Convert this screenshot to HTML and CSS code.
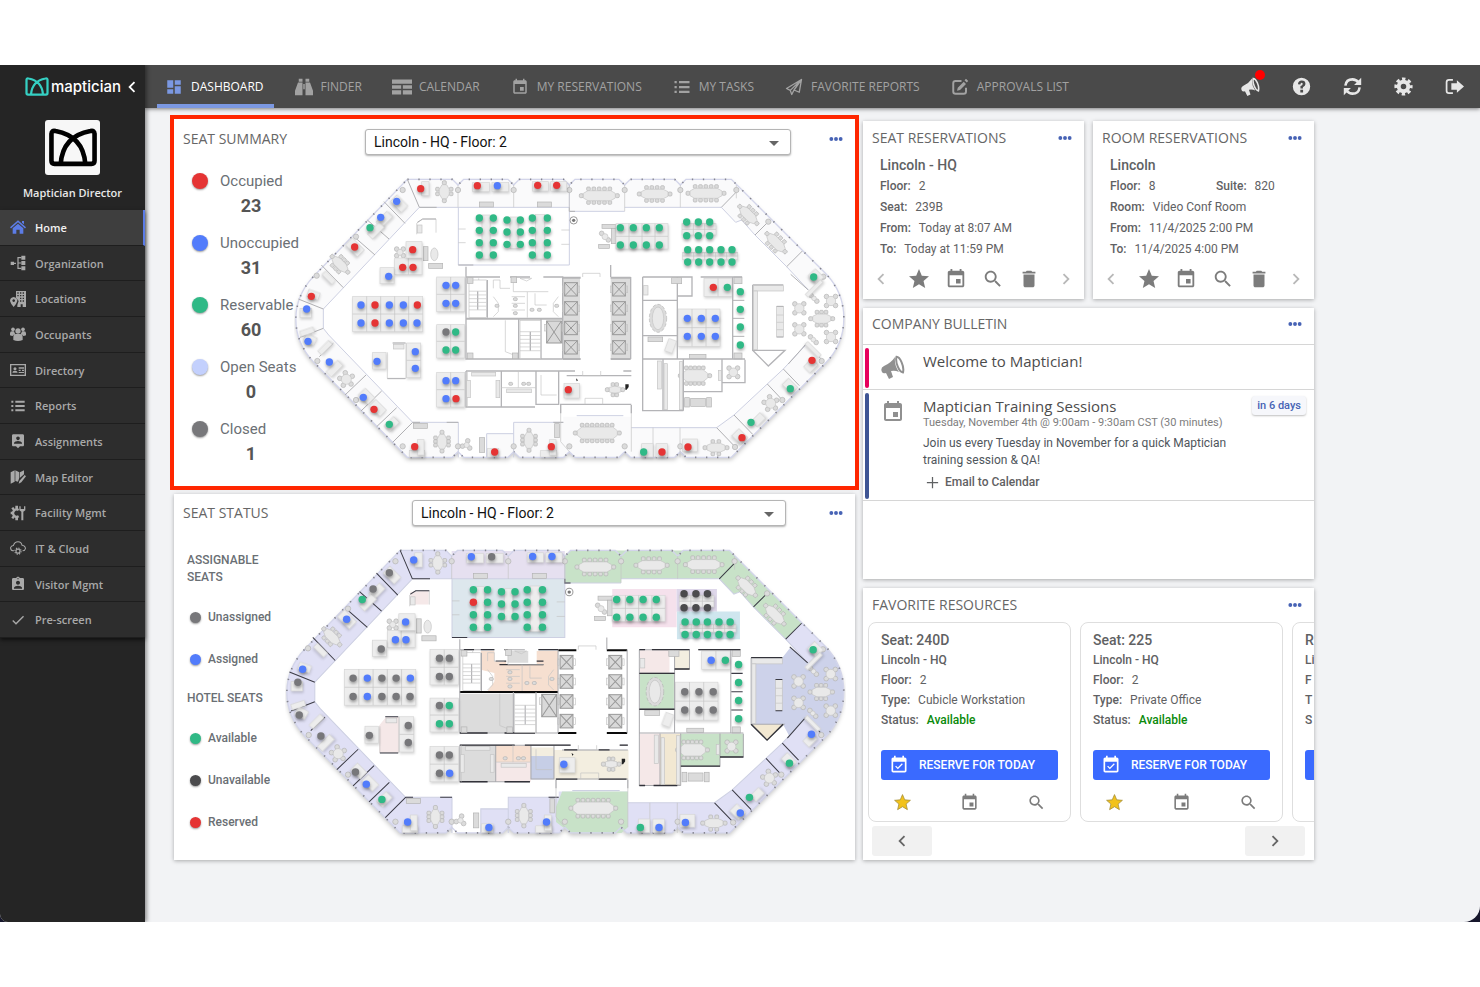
FILE: index.html
```html
<!doctype html>
<html lang="en">
<head>
    <meta charset="utf-8">
    <meta name="viewport" content="width=device-width, initial-scale=1">
    <title>Maptician - Dashboard</title>
    <link rel="stylesheet" href="styles.css">
</head>

<body>
<!-- Icons -->
<svg class="sprite" aria-hidden="true">
    <symbol id="i-logo" viewBox="0 0 48 38"><path d="M3 6Q3 2 7 3Q34 8 36 35M45 6Q45 2 41 3Q14 8 12 35M3 5V32Q3 35 6 35H42Q45 35 45 32V5" fill="none" stroke="currentColor" stroke-width="4.5"/></symbol>
    <symbol id="i-dashboard" viewBox="0 0 24 24"><path d="M3 13h8V3H3v10zm0 8h8v-6H3v6zm10 0h8V11h-8v10zm0-18v6h8V3h-8z"/></symbol>
    <symbol id="i-finder" viewBox="0 0 24 24"><path d="M5 1h5v4H5zM14 1h5v4h-5zM4 6h6v17H0v-6zM14 6h6l4 11v6H14zM11 8h2v7h-2z"/></symbol>
    <symbol id="i-table" viewBox="0 0 24 20"><path d="M0 1h24v5H0zM0 8h11v4H0zM13 8h11v4H13zM0 14h11v5H0zM13 14h11v5H13z"/></symbol>
    <symbol id="i-event" viewBox="0 0 24 24"><path d="M17 12h-5v5h5v-5zM16 1v2H8V1H6v2H5c-1.11 0-1.99.9-1.99 2L3 19c0 1.1.89 2 2 2h14c1.1 0 2-.9 2-2V5c0-1.1-.9-2-2-2h-1V1h-2zm3 18H5V8h14v11z"/></symbol>
    <symbol id="i-event-ok" viewBox="0 0 24 24"><path d="M16.53 11.06L15.47 10l-4.88 4.88-2.12-2.12-1.06 1.06L10.59 17l5.94-5.94zM19 3h-1V1h-2v2H8V1H6v2H5c-1.11 0-1.99.9-1.99 2L3 19c0 1.1.89 2 2 2h14c1.1 0 2-.9 2-2V5c0-1.1-.9-2-2-2zm0 16H5V8h14v11z"/></symbol>
    <symbol id="i-list" viewBox="0 0 24 24"><path d="M2 4h3v3H2zM8 4h14v3H8zM2 10.500h3v3H2zM8 10.500h14v3H8zM2 17h3v3H2zM8 17h14v3H8z"/></symbol>
    <symbol id="i-plane" viewBox="0 0 24 24"><path d="M22 2L2 14l5 2.500L22 2l-3 17-7-3-3 6-2-5.500M22 2L12 16" fill="none" stroke="currentColor" stroke-width="1.800" stroke-linejoin="round"/></symbol>
    <symbol id="i-approve" viewBox="0 0 24 24"><path d="M14 4H6Q3 4 3 7v11q0 3 3 3h11q3 0 3-3v-5" fill="none" stroke="currentColor" stroke-width="2.600"/><path d="M8 17l1-4 8-8 3 3-8 8zM20 1l3 3-2 2-3-3z"/></symbol>
    <symbol id="i-horn" viewBox="0 0 24 24"><path d="M1 17Q-1 13 3 11Q10 8 14 2Q13 10 18 17Q14 15 10 16l2 6-4 2-3-6Q2 19 1 17z"/><path d="M15.500 1.800C19 2 23.500 11 22 17.500C18 17 14 7 15.500 1.800z" fill="none" stroke="currentColor" stroke-width="2"/></symbol>
    <symbol id="i-help" viewBox="0 0 24 24"><path d="M12 1a11 11 0 1 0 0 22 11 11 0 0 0 0-22zM10.500 16h3.500v3.500h-3.500zM7.500 9Q8 4.500 12.300 4.500Q17 4.500 17 8.800Q17 11.500 13.800 12.800V14.500H10.700V11.500Q13.500 10.300 13.500 8.800Q13.500 7.400 12.200 7.400Q10.800 7.400 10.500 9.400z" fill-rule="evenodd"/></symbol>
    <symbol id="i-sync" viewBox="0 0 24 24"><path d="M3 11Q4 3 12 3Q16.500 3 20 7M21 13Q20 21 12 21Q7.500 21 4 17" fill="none" stroke="currentColor" stroke-width="3.200"/><path d="M23 1v9h-9zM1 23v-9h9z"/></symbol>
    <symbol id="i-gear" viewBox="0 0 24 24"><circle cx="12" cy="12" r="6" fill="none" stroke="currentColor" stroke-width="5"/><circle cx="12" cy="12" r="9.500" fill="none" stroke="currentColor" stroke-width="4" stroke-dasharray="4.200 3.260" stroke-dashoffset="2.100"/></symbol>
    <symbol id="i-exit" viewBox="0 0 24 24"><path d="M10 3.500H5Q2 3.500 2 6.500v11Q2 20.500 5 20.500h5" fill="none" stroke="currentColor" stroke-width="2.200"/><path d="M8 8h7V4l9 8-9 8v-4H8z"/></symbol>
    <symbol id="i-home" viewBox="0 0 24 24"><path d="M12 2l12 10.500-1.500 1.700L12 5 1.500 14.200 0 12.500zM18 3h3v5l-3-2.500zM12 7l8 7v8h-5.500v-6h-5v6H4v-8z"/></symbol>
    <symbol id="i-org" viewBox="0 0 24 24"><path d="M1 10h5v5H1zM17 1h6v6h-6zM17 9h6v6h-6zM17 17h6v6h-6z"/><path d="M6 12.500h3M17 4h-5v16h5M12 12h5" fill="none" stroke="currentColor" stroke-width="1.800"/></symbol>
    <symbol id="i-building" viewBox="0 0 24 24"><path d="M9 0h15v24h-5v-4h-3v4h-5v-3l2-6-4-5zM11 2v2h2V2zM15 2v2h2V2zM19 2v2h2V2zM11 6v2h2V6zM15 6v2h2V6zM19 6v2h2V6zM15 10v2h2v-2zM19 10v2h2v-2zM15 14v2h2v-2zM19 14v2h2v-2z" fill-rule="evenodd"/><path d="M5.500 9Q11 10 11 15Q10 19 5.500 24Q1 19 0 15Q0 10 5.500 9zM5.500 12.500a2 2 0 1 0 .1 0z" fill-rule="evenodd"/></symbol>
    <symbol id="i-people" viewBox="0 0 24 24"><circle cx="12" cy="7.500" r="4"/><circle cx="4.500" cy="5" r="2.800"/><circle cx="19.500" cy="5" r="2.800"/><path d="M5 21v-4q0-5 4-5h6q4 0 4 5v4q-7 3-14 0zM0 14V11q0-3 3-3h3q1 3 2 4-3 1-4 3-2 0-4-1zM24 14V11q0-3-3-3h-3q-1 3-2 4 3 1 4 3 2 0 4-1z"/></symbol>
    <symbol id="i-idcard" viewBox="0 0 24 20"><path d="M1 2h22v16H1z" fill="none" stroke="currentColor" stroke-width="2"/><circle cx="7.500" cy="8" r="2.300"/><path d="M3.500 14q0-3 4-3t4 3zM13 6h8v2h-8zM13 9.500h3v2h-3zM18 9.500h3v2h-3zM13 13h8v1.500h-8z"/></symbol>
    <symbol id="i-assign" viewBox="0 0 24 24"><path d="M19 2H5c-1.110 0-2 .9-2 2v14c0 1.100.89 2 2 2h4l3 3 3-3h4c1.100 0 2-.9 2-2V4c0-1.100-.9-2-2-2zm-7 3.300c1.490 0 2.700 1.210 2.700 2.700 0 1.490-1.210 2.700-2.700 2.700-1.490 0-2.700-1.210-2.700-2.700 0-1.490 1.210-2.700 2.700-2.700zM18 16H6v-.9c0-2 4-3.100 6-3.100s6 1.100 6 3.100v.9z"/></symbol>
    <symbol id="i-map" viewBox="0 0 24 24"><path d="M1 5l6-3v17l-6 3zM8 2l6 3v8l-2 6-4-1zM15 5l6-3v6l-6 5zM22 9l2 2-7 9-4 2 1-4z"/></symbol>
    <symbol id="i-facility" viewBox="0 0 24 24"><path d="M13 7.500A5.500 5.500 0 1 0 13 17" fill="none" stroke="currentColor" stroke-width="3.500"/><path d="M8 1h4v5H8zM8 18h4v5H8zM1 10h4v4H1zM2 5l3-2 3 4-3 2zM2 19l3 2 3-4-3-2zM14 2v6l3 2v13h3V10l3-2V2h-2v4h-5V2z"/></symbol>
    <symbol id="i-cloud" viewBox="0 0 28 26"><path d="M7 18H5Q1 17 1 12.500Q2 9 6 8.500Q8 2 14 2Q20 2 21 8Q27 9 27 14Q26 18 22 18" fill="none" stroke="currentColor" stroke-width="1.800"/><circle cx="14" cy="18.500" r="3.500" fill="none" stroke="currentColor" stroke-width="2"/><circle cx="14" cy="18.500" r="5.500" fill="none" stroke="currentColor" stroke-width="2" stroke-dasharray="2.200 2.120"/></symbol>
    <symbol id="i-visitor" viewBox="0 0 24 24"><path d="M19 3h-4.180C14.400 1.840 13.300 1 12 1c-1.300 0-2.400.84-2.820 2H5c-1.100 0-2 .9-2 2v14c0 1.100.9 2 2 2h14c1.100 0 2-.9 2-2V5c0-1.100-.9-2-2-2zm-7 0c.55 0 1 .45 1 1s-.45 1-1 1-1-.45-1-1 .45-1 1-1zm0 4c1.660 0 3 1.340 3 3s-1.340 3-3 3-3-1.340-3-3 1.340-3 3-3zm6 12H6v-1.400c0-2 4-3.100 6-3.100s6 1.100 6 3.100V19z"/></symbol>
    <symbol id="i-check" viewBox="0 0 24 24"><path d="M9 16.170L4.830 12l-1.420 1.410L9 19 21 7l-1.410-1.410z"/></symbol>
    <symbol id="i-search" viewBox="0 0 24 24"><path d="M15.500 14h-.79l-.28-.27C15.410 12.590 16 11.110 16 9.500 16 5.910 13.090 3 9.500 3S3 5.910 3 9.500 5.910 16 9.500 16c1.610 0 3.090-.59 4.230-1.570l.27.28v.79l5 4.990L20.490 19l-4.990-5zm-6 0C7.010 14 5 11.990 5 9.500S7.010 5 9.500 5 14 7.010 14 9.500 11.990 14 9.500 14z"/></symbol>
    <symbol id="i-trash" viewBox="0 0 24 24"><path d="M6 19c0 1.100.9 2 2 2h8c1.100 0 2-.9 2-2V7H6v12zM19 4h-3.500l-1-1h-5l-1 1H5v2h14V4z"/></symbol>
    <symbol id="i-star" viewBox="0 0 24 24"><path d="M12 17.270L18.180 21l-1.640-7.030L22 9.240l-7.190-.61L12 2 9.190 8.630 2 9.240l5.460 4.730L5.820 21z"/></symbol>
    <symbol id="i-left" viewBox="0 0 24 24"><path d="M15.410 7.410L14 6l-6 6 6 6 1.410-1.410L10.830 12z"/></symbol>
    <symbol id="i-right" viewBox="0 0 24 24"><path d="M10 6L8.590 7.410 13.170 12l-4.580 4.590L10 18l6-6z"/></symbol>
    <symbol id="i-dots" viewBox="0 0 24 24"><circle cx="4" cy="12" r="3.300"/><circle cx="12" cy="12" r="3.300"/><circle cx="20" cy="12" r="3.300"/></symbol>
    <symbol id="i-plus" viewBox="0 0 24 24"><path d="M11 3h2v8h8v2h-8v8h-2v-8H3v-2h8z"/></symbol>
</svg>

<div class="screen">
<div class="app">
    <!-- Sidebar -->
    <aside class="sidebar">
        <div class="brand">
            <svg class="brand-mark"><use href="#i-logo"/></svg>
            <span class="brand-name">maptician</span>
            <button class="collapse" aria-label="Collapse menu"><svg><use href="#i-left"/></svg></button>
        </div>
        <div class="profile">
            <div class="avatar"><svg><use href="#i-logo"/></svg></div>
            <div class="profile-name">Maptician Director</div>
        </div>
        <nav class="side-nav">
            <a class="active" href="#home"><svg><use href="#i-home"/></svg>Home</a>
            <a href="#organization"><svg><use href="#i-org"/></svg>Organization</a>
            <a href="#locations"><svg><use href="#i-building"/></svg>Locations</a>
            <a href="#occupants"><svg><use href="#i-people"/></svg>Occupants</a>
            <a href="#directory"><svg><use href="#i-idcard"/></svg>Directory</a>
            <a href="#reports"><svg><use href="#i-list"/></svg>Reports</a>
            <a href="#assignments"><svg><use href="#i-assign"/></svg>Assignments</a>
            <a href="#map-editor"><svg><use href="#i-map"/></svg>Map Editor</a>
            <a href="#facility"><svg><use href="#i-facility"/></svg>Facility Mgmt</a>
            <a href="#cloud"><svg><use href="#i-cloud"/></svg>IT &amp; Cloud</a>
            <a href="#visitors"><svg><use href="#i-visitor"/></svg>Visitor Mgmt</a>
            <a href="#pre-screen"><svg><use href="#i-check"/></svg>Pre-screen</a>
        </nav>
    </aside>

    <div class="page">
        <!-- Top bar -->
        <header class="topbar">
            <nav class="tabs">
                <a class="active" href="#dashboard"><svg><use href="#i-dashboard"/></svg>DASHBOARD</a>
                <a href="#finder"><svg><use href="#i-finder"/></svg>FINDER</a>
                <a href="#calendar"><svg><use href="#i-table"/></svg>CALENDAR</a>
                <a href="#my-reservations"><svg><use href="#i-event"/></svg>MY RESERVATIONS</a>
                <a href="#my-tasks"><svg><use href="#i-list"/></svg>MY TASKS</a>
                <a href="#favorite-reports"><svg><use href="#i-plane"/></svg>FAVORITE REPORTS</a>
                <a href="#approvals"><svg><use href="#i-approve"/></svg>APPROVALS LIST</a>
            </nav>
            <div class="tools">
                <button class="has-alert" aria-label="Announcements"><svg><use href="#i-horn"/></svg></button>
                <button aria-label="Help"><svg><use href="#i-help"/></svg></button>
                <button aria-label="Refresh"><svg><use href="#i-sync"/></svg></button>
                <button aria-label="Settings"><svg><use href="#i-gear"/></svg></button>
                <button aria-label="Sign out"><svg><use href="#i-exit"/></svg></button>
            </div>
        </header>

        <main class="dashboard">
            <div class="col-maps">
                <!-- Seat summary -->
                <section class="card summary">
                    <div class="map-head">
                        <h2>SEAT SUMMARY</h2>
                        <div class="select">
                            <select aria-label="Seat summary floor"><option>Lincoln - HQ - Floor: 2</option></select>
                        </div>
                        <button class="more" aria-label="More"><svg><use href="#i-dots"/></svg></button>
                    </div>
                    <div class="map-body">
                        <ul class="totals">
                            <li><i class="dot red"></i>Occupied <b>23</b></li>
                            <li><i class="dot blue"></i>Unoccupied <b>31</b></li>
                            <li><i class="dot green"></i>Reservable <b>60</b></li>
                            <li><i class="dot pale"></i>Open Seats <b>0</b></li>
                            <li><i class="dot gray"></i>Closed <b>1</b></li>
                        </ul>
                        <svg class="plan" id="planSummary" viewBox="42 30 1656 870" role="img" aria-label="Floor 2 seat summary"></svg>
                    </div>
                </section>

                <!-- Seat status -->
                <section class="card status">
                    <div class="map-head">
                        <h2>SEAT STATUS</h2>
                        <div class="select">
                            <select aria-label="Seat status floor"><option>Lincoln - HQ - Floor: 2</option></select>
                        </div>
                        <button class="more" aria-label="More"><svg><use href="#i-dots"/></svg></button>
                    </div>
                    <div class="map-body">
                        <div class="legend">
                            <h3>ASSIGNABLE SEATS</h3>
                            <ul>
                                <li><i class="dot gray"></i>Unassigned</li>
                                <li><i class="dot blue"></i>Assigned</li>
                            </ul>
                            <h3>HOTEL SEATS</h3>
                            <ul>
                                <li><i class="dot green"></i>Available</li>
                                <li><i class="dot dark"></i>Unavailable</li>
                                <li><i class="dot red"></i>Reserved</li>
                            </ul>
                        </div>
                        <svg class="plan zoned" id="planStatus" viewBox="42 30 1656 870" role="img" aria-label="Floor 2 seat status"></svg>
                    </div>
                </section>
            </div>

            <div class="col-info">
                <div class="reservations">
                    <section class="card reservation">
                        <div class="card-head">
                            <h2>SEAT RESERVATIONS</h2>
                            <button class="more" aria-label="More"><svg><use href="#i-dots"/></svg></button>
                        </div>
                        <div class="details">
                            <h3>Lincoln - HQ</h3>
                            <p><b>Floor:</b> 2</p>
                            <p><b>Seat:</b> 239B</p>
                            <p><b>From:</b> Today at 8:07 AM</p>
                            <p><b>To:</b> Today at 11:59 PM</p>
                        </div>
                        <div class="actions">
                            <button class="faint" aria-label="Previous"><svg><use href="#i-left"/></svg></button>
                            <button aria-label="Favorite"><svg class="big"><use href="#i-star"/></svg></button>
                            <button aria-label="Calendar"><svg><use href="#i-event"/></svg></button>
                            <button aria-label="Find"><svg><use href="#i-search"/></svg></button>
                            <button aria-label="Delete"><svg><use href="#i-trash"/></svg></button>
                            <button class="faint" aria-label="Next"><svg><use href="#i-right"/></svg></button>
                        </div>
                    </section>

                    <section class="card reservation">
                        <div class="card-head">
                            <h2>ROOM RESERVATIONS</h2>
                            <button class="more" aria-label="More"><svg><use href="#i-dots"/></svg></button>
                        </div>
                        <div class="details">
                            <h3>Lincoln</h3>
                            <div class="pair"><p><b>Floor:</b> 8</p><p><b>Suite:</b> 820</p></div>
                            <p><b>Room:</b> Video Conf Room</p>
                            <p><b>From:</b> 11/4/2025 2:00 PM</p>
                            <p><b>To:</b> 11/4/2025 4:00 PM</p>
                        </div>
                        <div class="actions">
                            <button class="faint" aria-label="Previous"><svg><use href="#i-left"/></svg></button>
                            <button aria-label="Favorite"><svg class="big"><use href="#i-star"/></svg></button>
                            <button aria-label="Calendar"><svg><use href="#i-event"/></svg></button>
                            <button aria-label="Find"><svg><use href="#i-search"/></svg></button>
                            <button aria-label="Delete"><svg><use href="#i-trash"/></svg></button>
                            <button class="faint" aria-label="Next"><svg><use href="#i-right"/></svg></button>
                        </div>
                    </section>
                </div>

                <!-- Bulletin -->
                <section class="card bulletin">
                    <div class="card-head">
                        <h2>COMPANY BULLETIN</h2>
                        <button class="more" aria-label="More"><svg><use href="#i-dots"/></svg></button>
                    </div>
                    <article class="news">
                        <svg><use href="#i-horn"/></svg>
                        <div><h3>Welcome to Maptician!</h3></div>
                    </article>
                    <article class="news navy">
                        <svg><use href="#i-event"/></svg>
                        <div>
                            <h3>Maptician Training Sessions</h3>
                            <p class="when">Tuesday, November 4th @ 9:00am - 9:30am CST (30 minutes)</p>
                            <p class="text">Join us every Tuesday in November for a quick Maptician training session &amp; QA!</p>
                            <button class="email"><svg><use href="#i-plus"/></svg>Email to Calendar</button>
                        </div>
                        <span class="badge">in 6 days</span>
                    </article>
                </section>

                <!-- Favorites -->
                <section class="card favorites">
                    <div class="card-head">
                        <h2>FAVORITE RESOURCES</h2>
                        <button class="more" aria-label="More"><svg><use href="#i-dots"/></svg></button>
                    </div>
                    <div class="carousel">
                        <article class="resource">
                            <h3>Seat: 240D</h3>
                            <p><b>Lincoln - HQ</b></p>
                            <p><b>Floor:</b> 2</p>
                            <p><b>Type:</b> Cubicle Workstation</p>
                            <p><b>Status:</b> <span class="ok">Available</span></p>
                            <button class="reserve"><svg><use href="#i-event-ok"/></svg>RESERVE FOR TODAY</button>
                            <div class="resource-actions">
                                <button class="starred" aria-label="Favorite"><svg><use href="#i-star"/></svg></button>
                                <button aria-label="Calendar"><svg><use href="#i-event"/></svg></button>
                                <button aria-label="Find"><svg><use href="#i-search"/></svg></button>
                            </div>
                        </article>
                        <article class="resource">
                            <h3>Seat: 225</h3>
                            <p><b>Lincoln - HQ</b></p>
                            <p><b>Floor:</b> 2</p>
                            <p><b>Type:</b> Private Office</p>
                            <p><b>Status:</b> <span class="ok">Available</span></p>
                            <button class="reserve"><svg><use href="#i-event-ok"/></svg>RESERVE FOR TODAY</button>
                            <div class="resource-actions">
                                <button class="starred" aria-label="Favorite"><svg><use href="#i-star"/></svg></button>
                                <button aria-label="Calendar"><svg><use href="#i-event"/></svg></button>
                                <button aria-label="Find"><svg><use href="#i-search"/></svg></button>
                            </div>
                        </article>
                        <article class="resource">
                            <h3>R</h3>
                            <p><b>Li</b></p>
                            <p><b>F</b></p>
                            <p><b>T</b></p>
                            <p><b>S</b></p>
                            <button class="reserve" aria-label="Reserve for today"></button>
                        </article>
                    </div>
                    <div class="pager">
                        <button aria-label="Previous"><svg><use href="#i-left"/></svg></button>
                        <button aria-label="Next"><svg><use href="#i-right"/></svg></button>
                    </div>
                </section>
            </div>
        </main>
    </div>
</div>
</div>

<script src="plan.js"></script>
</body>
</html>
```
FILE: styles.css
```css
* {
    box-sizing: border-box;
}

body {
    margin: 0;
    padding: 65px 0;
    background: #fff;
    color: #5f6163;
    font-family: Roboto, "Liberation Sans", sans-serif;
    font-size: 12px;
}

h2, h3, p, ul {
    margin: 0;
    padding: 0;
    font-weight: 500;
}

ul {
    list-style: none;
}

b {
    font-weight: 500;
}

a {
    color: inherit;
    text-decoration: none;
}

button {
    padding: 0;
    border: 0;
    background: none;
    color: inherit;
    font: inherit;
}

svg {
    display: block;
    flex: none;
    fill: currentColor;
}

.sprite {
    position: absolute;
    width: 0;
    height: 0;
}

.screen {
    background: #17172c;
}

.app {
    display: flex;
    min-height: calc(100vh - 130px);
    background: #f2f3f5;
    border-radius: 0 0 16px 8px;
    overflow: hidden;
}

/* Sidebar */
.sidebar {
    position: relative;
    z-index: 2;
    flex: none;
    width: 145px;
    background: #252525;
    box-shadow: 2px 0 4px rgba(0, 0, 0, .4);
    color: #a9a9a9;
    font-family: "Open Sans", sans-serif;
}

.brand {
    display: flex;
    align-items: center;
    height: 43px;
    padding-left: 25px;
    color: #fff;
}

.brand-mark {
    width: 24px;
    height: 19px;
    color: #35d0c3;
}

.brand-name {
    margin-left: 2px;
    font: 500 15px/20px Inter, sans-serif;
}

.collapse svg {
    width: 22px;
    height: 22px;
}

.profile {
    padding: 12px 0 8px;
    color: #e8e8e8;
    text-align: center;
}

.avatar {
    display: grid;
    place-items: center;
    width: 55px;
    height: 55px;
    margin: 0 auto 9px;
    border-radius: 3px;
    background: #f7f7f7;
    color: #000;
}

.avatar svg {
    width: 50px;
    height: 39px;
}

.profile-name {
    font-size: 11px;
    font-weight: 600;
    line-height: 18px;
}

.side-nav {
    display: flex;
    flex-direction: column;
    height: 428px;
    box-shadow: 0 2px 4px rgba(0, 0, 0, .6);
}

.side-nav a {
    display: flex;
    flex: 1;
    align-items: center;
    gap: 9px;
    padding-left: 10px;
    border-bottom: 1px solid #1e1e1e;
    background: #2d2d2d;
    font-size: 11px;
    font-weight: 600;
}

.side-nav svg {
    width: 16px;
    height: 16px;
}

.side-nav .active {
    border-right: 2px solid #5c7ce6;
    background: #3e3e3e;
    color: #f2f2f2;
}

.side-nav .active svg {
    color: #5c7ce6;
}

/* Top bar */
.page {
    flex: 1;
    min-width: 0;
}

.topbar {
    position: relative;
    display: flex;
    justify-content: space-between;
    height: 43px;
    padding: 0 12px;
    background: #4a4a4a;
    box-shadow: 0 1px 4px rgba(0, 0, 0, .5);
    color: #a2a2a2;
}

.tabs {
    display: flex;
    gap: 13px;
    font: 500 12px "Open Sans", sans-serif;
}

.tabs a {
    display: flex;
    align-items: center;
    gap: 7px;
    padding: 0 10px 0 7px;
    border-bottom: 4px solid transparent;
    border-top: 4px solid transparent;
    white-space: nowrap;
}

.tabs svg {
    width: 20px;
    height: 18px;
}

.tabs .active {
    border-bottom-color: #7b98e2;
    color: #fff;
}

.tabs .active svg {
    color: #7b98e2;
}

.tools {
    display: flex;
    gap: 23px;
    color: #e6e6e6;
}

.tools button {
    position: relative;
    display: grid;
    place-items: center;
    width: 28px;
}

.tools svg {
    width: 19px;
    height: 19px;
}

.has-alert::after {
    content: "";
    position: absolute;
    top: 5px;
    right: -1px;
    width: 10px;
    height: 10px;
    border-radius: 50%;
    background: #f00;
}

/* Layout */
.dashboard {
    display: grid;
    grid-template-columns: 681fr 451fr;
    gap: 8px;
    padding: 13px 166px 61px 29px;
}

.card {
    background: #fff;
    box-shadow: 0 1px 4px rgba(0, 0, 0, .3);
}

.card h2 {
    color: #666;
    font: 500 14px/20px "Open Sans", sans-serif;
    white-space: nowrap;
}

.more {
    width: 24px;
    height: 20px;
    color: #4763b5;
}

.more svg {
    width: 14px;
    height: 14px;
    margin: 0 auto;
}

.col-maps,
.col-info {
    display: flex;
    flex-direction: column;
    min-width: 0;
}

.col-maps {
    gap: 8px;
    margin-top: -2px;
}

.col-info {
    gap: 9px;
}

/* Map cards */
.summary {
    min-height: 367px;
    outline: 4px solid #ff2600;
}

.status {
    flex: 1;
}

.map-head {
    display: grid;
    grid-template-columns: 149px 1fr 24px;
    gap: 0 33px;
    align-items: start;
    padding: 10px 7px 0 9px;
}

.status .map-head {
    grid-template-columns: 191px 1fr 24px;
    gap: 0 38px;
    align-items: center;
    padding-top: 6px;
}

.select {
    position: relative;
}

.select select {
    display: block;
    width: 100%;
    height: 26px;
    padding: 0 8px;
    appearance: none;
    border: 1px solid #b5b5b5;
    border-radius: 3px;
    background: #fff;
    box-shadow: 0 1px 2px rgba(0, 0, 0, .3);
    color: #111;
    font: 14px Roboto, sans-serif;
}

.select::after {
    content: "";
    position: absolute;
    top: 12px;
    right: 12px;
    border: 5px solid transparent;
    border-top-color: #666;
    border-bottom: 0;
}

.map-body {
    display: flex;
    align-items: flex-start;
    padding-right: 9px;
}

.totals {
    flex: none;
    width: 120px;
    padding: 14px 0 0 18px;
    font-size: 15px;
    font-weight: 400;
    line-height: 24px;
    white-space: nowrap;
}

.totals li {
    display: grid;
    grid-template-columns: 28px auto;
    align-items: center;
    margin-bottom: 13px;
    color: #6b7075;
}

.totals b {
    grid-column: 1 / -1;
    width: 118px;
    color: #555;
    font-size: 18px;
    font-weight: 700;
    line-height: 25px;
    text-align: center;
}

.dot {
    width: 16px;
    height: 16px;
    border-radius: 50%;
    box-shadow: 0 1px 2px rgba(0, 0, 0, .4);
}

.red { background: #e53434; }
.blue { background: #527cfb; }
.green { background: #30b986; }
.pale { background: #c3d0fd; }
.gray { background: #77777a; }
.dark { background: #4b4b4d; }

.legend {
    flex: none;
    width: 111px;
    padding: 26px 0 0 13px;
    color: #6a6f74;
    font-weight: 500;
    white-space: nowrap;
}

.legend h3 {
    width: 90px;
    font-size: 12px;
    line-height: 17px;
    white-space: normal;
}

.legend ul {
    padding: 10px 0 10px 3px;
}

.legend li {
    display: flex;
    align-items: center;
    gap: 7px;
    height: 42px;
}

.legend .dot {
    width: 11px;
    height: 11px;
}

.plan {
    flex: 1;
    min-width: 0;
    margin-top: 20px;
}

/* Floor plan */
.floor { fill: #fafafb; filter: drop-shadow(0 8px 6px rgba(0, 0, 0, .22)); }
.outer { fill: none; stroke: #d3d5ea; stroke-width: 4; }
.studs { fill: none; stroke: #85858f; stroke-width: 5; stroke-dasharray: 4 29; }
.inner { fill: none; stroke: #cdd0e2; stroke-width: 3; }
.part { fill: none; stroke: #b0b0b3; stroke-width: 3; }
.wall { fill: none; stroke: #b4b4b7; stroke-width: 4; }
.thin { fill: none; stroke: #c4c4c4; stroke-width: 2; }
.heavy { fill: none; stroke: #b5b5b7; stroke-width: 6; }
.zoned .floor { fill: #e0e0f5; }
.zoned .part { stroke: #3b3b45; }
.zoned .wall { stroke: #a9a9ad; stroke-width: 3; }
.zoned .heavy { stroke: #0a0a0a; }
.beam { fill: none; stroke: none; stroke-width: 4; }
.zoned .beam { stroke: #33333a; }
.shaft { fill: #d9d9d9; stroke: #999; stroke-width: 3; }
.shaft-bg { fill: #dcdcdc; }
.zoned .shaft-bg { fill: #fff; }
.desk { fill: #ededed; stroke: #d6d6d6; stroke-width: 2; filter: drop-shadow(2px 5px 3px rgba(0, 0, 0, .16)); }
.chair { fill: #dbdbdb; stroke: #b3b3b3; stroke-width: 2; }
.table { fill: #e9e9e9; stroke: #c4c4c4; stroke-width: 2; }
.seats { filter: drop-shadow(1px 6px 4px rgba(0, 0, 0, .35)); }
.seat-r { fill: #e53434; }
.seat-b { fill: #527cfb; }
.seat-g { fill: #30b986; }
.seat-x { fill: #77777a; }
.seat-k { fill: #4b4b4d; }

/* Reservations */
.reservations {
    display: grid;
    grid-template-columns: 1fr 1fr;
    gap: 9px;
}

.reservation {
    min-height: 178px;
}

.card-head {
    display: flex;
    align-items: center;
    justify-content: space-between;
    padding: 7px 7px 0 9px;
}

.details {
    padding: 6px 17px 0;
    line-height: 21px;
}

.details h3 {
    font-size: 14px;
    line-height: 22px;
}

.details b,
.resource p b {
    margin-right: 5px;
}

.pair {
    display: grid;
    grid-template-columns: 106px 1fr;
}

p {
    font-weight: 400;
}

.actions {
    display: flex;
    align-items: center;
    justify-content: space-between;
    height: 38px;
    padding: 0 7px;
    color: #7c7c7c;
}

.actions svg {
    width: 22px;
    height: 22px;
}

.actions .big {
    width: 24px;
    height: 24px;
}

.faint {
    color: #b8b8b8;
}

/* Bulletin */
.bulletin {
    min-height: 271px;
}

.bulletin .card-head {
    height: 37px;
    padding-top: 0;
    padding-bottom: 4px;
    border-bottom: 1px solid #d6d6d6;
}

.news {
    display: flex;
    align-items: flex-start;
    position: relative;
    min-height: 45px;
    padding: 5px 8px 8px 18px;
    border-bottom: 1px solid #d6d6d6;
}

.news::before {
    content: "";
    position: absolute;
    inset: 3px auto 1px 2px;
    width: 4px;
    border-radius: 2px;
    background: #e6005c;
}

.navy::before {
    background: #3f5594;
}

.news > svg {
    width: 24px;
    height: 24px;
    margin: 5px 18px 0 0;
    color: #909090;
}

.news h3 {
    color: #4c4c4c;
    font: 500 15px/22px "Open Sans", sans-serif;
}

.news > div {
    flex: 1;
    min-width: 0;
}

.news .when {
    margin-top: -1px;
    color: #7d7d7d;
    font-size: 11px;
    line-height: 14px;
}

.text {
    max-width: 330px;
    margin-top: 5px;
    color: #4f565c;
    line-height: 17px;
}

.email {
    display: flex;
    align-items: center;
    gap: 5px;
    height: 20px;
    margin: 3px 0 0 2px;
    font-weight: 500;
}

.email svg {
    width: 15px;
    height: 15px;
}

.badge {
    position: absolute;
    top: 6px;
    right: 8px;
    padding: 0 5px;
    border-radius: 3px;
    background: #f6f7fb;
    box-shadow: 0 1px 2px rgba(0, 0, 0, .25);
    color: #4763b5;
    font-size: 11px;
    font-weight: 500;
    line-height: 19px;
}

/* Favorites */
.favorites {
    flex: 1;
    overflow: hidden;
}

.carousel {
    display: flex;
    gap: 9px;
    margin: 7px 0 0 5px;
    overflow: hidden;
}

.resource {
    flex: none;
    width: 203px;
    height: 200px;
    padding: 7px 12px;
    border: 1px solid #dedede;
    border-radius: 8px;
    line-height: 20px;
}

.resource h3 {
    font-size: 14px;
    line-height: 20px;
}

.ok {
    color: #0a8a0a;
    font-weight: 500;
}

.reserve {
    display: flex;
    align-items: center;
    gap: 10px;
    width: 100%;
    height: 30px;
    margin-top: 20px;
    padding-left: 8px;
    border-radius: 3px;
    background: #3a6aff;
    color: #fff;
    font-weight: 500;
}

.reserve svg {
    width: 20px;
    height: 20px;
}

.resource-actions {
    display: flex;
    justify-content: space-between;
    padding: 13px 12px 0;
    color: #7c7c7c;
}

.resource-actions svg {
    width: 19px;
    height: 19px;
}

.starred svg {
    color: #f2c21a;
    stroke: #a58f3c;
    overflow: visible;
}

.pager {
    display: flex;
    justify-content: space-between;
    padding: 4px 9px;
    color: #666;
}

.pager button {
    width: 60px;
    height: 30px;
    border-radius: 3px;
    background: #f1f1f1;
}

.pager svg {
    width: 22px;
    height: 22px;
    margin: 0 auto;
}
```
FILE: plan.js
```js
// x, y, colour in summary, colour in status
// r red, b blue, g green, x gray, k dark
const seats = [
    [422, 71, 'r', 'b'], [592, 62, 'r', 'b'], [652, 62, 'b', 'x'], [773, 61, 'r', 'b'], [830, 61, 'r', 'b'],
    [350, 109, 'b', 'x'], [302, 157, 'b', 'x'], [270, 188, 'g', 'g'], [224, 246, 'r', 'b'],
    [94, 394, 'r', 'b'], [80, 432, 'b', 'x'], [84, 529, 'b', 'x'], [148, 591, 'b', 'x'],
    [250, 697, 'b', 'x'], [282, 733, 'r', 'b'], [328, 778, 'g', 'g'], [404, 845, 'r', 'b'],
    [644, 861, 'r', 'b'], [814, 845, 'r', 'b'], [865, 674, 'r', 'b'],
    [398, 254, 'r', 'b'], [368, 307, 'r', 'b'], [399, 307, 'r', 'b'], [326, 334, 'b', 'x'],
    [243, 420, 'b', 'x'], [285, 420, 'r', 'b'], [328, 420, 'b', 'x'], [370, 420, 'b', 'x'], [412, 420, 'r', 'b'],
    [243, 474, 'b', 'x'], [285, 474, 'r', 'b'], [328, 474, 'b', 'x'], [370, 474, 'b', 'x'], [411, 474, 'b', 'x'],
    [406, 560, 'b', 'x'], [291, 589, 'b', 'x'], [406, 610, 'b', 'x'],
    [498, 361, 'b', 'x'], [527, 361, 'b', 'x'], [498, 415, 'b', 'x'], [527, 415, 'b', 'x'],
    [498, 501, 'x', 'x'], [527, 501, 'g', 'g'], [498, 555, 'g', 'g'], [527, 555, 'g', 'g'],
    [498, 647, 'b', 'x'], [527, 647, 'b', 'x'], [498, 701, 'b', 'x'], [528, 701, 'r', 'b'],
    [598, 196, 'g', 'r'],
    [1601, 336, 'g', 'g'], [1300, 367, 'r', 'b'], [1342, 367, 'g', 'g'],
    [1596, 586, 'r', 'b'], [1531, 671, 'g', 'g'], [1413, 772, 'g', 'g'], [1386, 818, 'r', 'b'],
    [1224, 846, 'r', 'b'], [1091, 861, 'g', 'g'], [1146, 861, 'r', 'b']
];

function addBlock(xs, ys, summary, status) {
    ys.forEach(y => xs.forEach(x => {
        if (!seats.some(s => s[0] === x && s[1] === y)) seats.push([x, y, summary, status]);
    }));
}

addBlock([598, 640, 757, 802], [159, 196, 233, 270], 'g', 'g');
addBlock([681, 721], [165, 201, 238], 'g', 'g');
addBlock([1021, 1060, 1099, 1138], [188, 240], 'g', 'g');
addBlock([1220, 1255, 1289], [171, 212], 'g', 'k');
addBlock([1223, 1256, 1289, 1323, 1356], [254, 291], 'g', 'g');
addBlock([1381], [380, 433, 486, 540], 'g', 'g');
addBlock([1222, 1264, 1306], [460, 514], 'b', 'x');

// room colours, only on the status plan
const zones = [
    ['#e6e0f0', 'M534 45H868V127H534z'],
    ['#c8e2c8', 'M868 60L885 43H1354L1567 258L1520 305L1425 210L1385 165L1367 172L1324 127H1034V139H868z'],
    ['#cdd2ea', 'M1418 360H1510L1535 328L1585 375L1636 325C1710 400 1710 520 1636 595L1580 537L1530 590L1512 556H1418z'],
    ['#dde7ed', 'M535 127H868V300H535z'],
    ['#f5e1ec', 'M1008 157H1198V270H1008z'],
    ['#ded7ea', 'M1198 157H1317V224H1198z'],
    ['#cfe6ee', 'M1199 223H1385V305H1199z'],
    ['#f6dfd0', 'M620 340H660V370H695V378H785V340H849V458H640L660 430V405L620 395zM664 620H768V668H664z'],
    ['#dcdcdc', 'M560 466H716V581H560zM560 620H664V726H560zM700 340H760V375H700z'],
    ['#f5e8e8', 'M664 668H768V726H664zM1090 338H1177V405H1090zM1090 584H1149V737H1090zM412 165L466 162V203H412zM340 535H378V640H320V560z'],
    ['#c6cee6', 'M768 650H836V719H768z'],
    ['#f3eee0', 'M768 625H836V650H768zM836 632H1056V719H836zM1192 338H1236V395H1192z'],
    ['#f2e8d2', 'M1149 584H1210V737H1149zM1418 556H1512L1467 603z'],
    ['#c8e2c8', 'M1090 406H1190V514H1090zM1210 584H1326V680H1210zM1326 584H1395V653H1326zM860 755H1054V860L1035 877H885L842 845V800z']
];

const floor = 'M382 43H517L534 60L551 43H684L701 60L718 43H851L868 60L885 43H1017L1034 60L1051 43H1184L1201 60L1218 43H1354'
    + 'L1636 325C1710 400 1710 520 1636 595L1354 877H1218L1201 860L1184 877H1051L1034 860L1017 877H885L868 860L851 877H718L701 860L684 877H551L534 860L517 877H382'
    + 'L100 590C30 515 30 410 100 335z';
const core = 'M418 127H868V139H1034V127H1324L1367 172L1385 165L1520 305L1585 375L1636 325C1710 400 1710 520 1636 595L1580 537L1510 612L1362 750L1310 788H1054V755H850V772H701V806H620V877H535V772H398L146 510L130 490V432z';

const path = (cls, d) => `<path class="${cls}" d="${d}"/>`;
const rect = (cls, x, y, w, h, r = 0) => `<rect class="${cls}" x="${x}" y="${y}" width="${w}" height="${h}" rx="${r}"/>`;

// meeting table with chairs on both long sides and at the ends
function table(x, y, w, h, n, angle = 0) {
    let out = `<g transform="translate(${x} ${y}) rotate(${angle})">`;
    for (let i = 0; i < n; i++) {
        const cx = -w / 2 + w * (i + 1) / (n + 1) - 6;
        out += rect('chair', cx, -h / 2 - 11, 11, 11, 3) + rect('chair', cx, h / 2, 11, 11, 3);
    }
    out += rect('chair', -w / 2 - 12, -6, 12, 12, 4) + rect('chair', w / 2, -6, 12, 12, 4);
    return out + `<path class="table" d="M${-w / 2} -7L${-w / 2 + 14} ${-h / 2}H${w / 2 - 14}L${w / 2} -7V7L${w / 2 - 14} ${h / 2}H${-w / 2 + 14}L${-w / 2} 7z"/></g>`;
}

function roundTable(x, y, r, n = 4) {
    let out = '';
    for (let i = 0; i < n; i++) {
        const a = Math.PI * 2 * i / n + .78;
        out += `<circle class="chair" cx="${x + Math.cos(a) * r}" cy="${y + Math.sin(a) * r}" r="7"/>`;
    }
    return out + `<circle class="table" cx="${x}" cy="${y}" r="${r - 5}"/>`;
}

function desk(x, y, w, h, angle = 0) {
    return `<g transform="rotate(${angle} ${x + w / 2} ${y + h / 2})">${rect('desk', x, y, w, h)}</g>`;
}

// cubicle group: cell walls around every seat
function cubicles(x, y, cols, rows, w, h) {
    let out = rect('desk', x, y, cols * w, rows * h);
    for (let i = 1; i < cols; i++) out += path('thin', `M${x + i * w} ${y}v${rows * h}`);
    for (let i = 1; i < rows; i++) out += path('thin', `M${x} ${y + i * h}h${cols * w}`);
    return out;
}

function lift(x, y, w = 38, h = 40) {
    return rect('shaft', x, y, w, h) + path('shaft', `M${x} ${y}l${w} ${h}M${x + w} ${y}l${-w} ${h}`)
        + rect('thin', x - 7, y + 10, 5, 20) + rect('thin', x + w + 2, y + 10, 5, 20);
}

function stairs(x, y, w, h) {
    let out = `<rect x="${x}" y="${y}" width="${w}" height="${h}" fill="#fff"/>` + rect('thin', x, y, w, h);
    out += path('wall', `M${x + w / 2} ${y + h * .3}v${h * .5}`);
    for (let i = 3; i < 9; i++) out += path('thin', `M${x} ${y + h * i / 10}h${w}`);
    return out;
}

function drawPlan(id, column, withZones) {
    let s = path('floor', floor) + `<path d="${core}" fill="#fff"/>`;
    if (withZones) s += zones.map(z => `<path fill="${z[0]}" d="${z[1]}"/>`).join('')
        + '<path fill="#e0e0f5" d="M1520 305L1567 258L1636 325L1585 375z"/>';

    // outside walls
    s += path('outer', floor) + path('studs', floor);
    s += path('inner', 'M418 127H868M868 139H1034M1034 127H1324L1367 172L1385 165L1425 210L1520 305L1585 375M418 127L130 432V490L146 510L398 772H535V877M620 877V806H701M701 877V772H850M535 127V300H868V60M1054 788H1310L1362 750L1510 612L1580 537M890 752H1030');
    s += path('part', 'M382 43L418 127M312 110L375 175M262 165L327 222M222 215L285 270M124 300L190 368M55 402L130 432M60 517L130 490M160 535L118 575M258 630L195 690M305 678L243 738M350 728L290 785M398 772L338 832M1324 127L1370 80M1425 210L1465 170M1520 305L1567 258M1532 328L1585 375M1310 788L1360 840M1362 750L1418 808M1462 657L1507 705M1510 612L1558 662M1525 597L1578 537L1622 580M418 127H470M398 772H420M500 772H535M820 772H850M535 300H580M868 127V139H885');
    s += path('thin', 'M534 60V127M701 60V127M868 60V139M1034 60V139M1201 60V127M1369 60V100M1119 788V877M1200 788V877M535 192h22M535 233h22M868 195h-24M868 238h-24M842 720V830L868 860M1054 720V860');
    [[534, 75], [701, 75], [868, 75], [1034, 75], [1201, 75], [1369, 75], [1465, 170], [1630, 335], [1625, 588], [1507, 705], [1365, 846], [1201, 844], [1034, 844], [868, 844], [701, 844], [534, 844], [368, 844], [228, 705], [112, 588], [110, 332], [228, 215], [368, 75]]
        .forEach(p => s += `<circle class="chair" cx="${p[0]}" cy="${p[1]}" r="8"/>`);

    // office furniture
    s += desk(425, 50, 22, 42) + desk(578, 52, 50, 28) + desk(636, 52, 50, 28) + desk(757, 50, 48, 28) + desk(812, 50, 48, 28);
    s += desk(335, 102, 46, 28, 45) + desk(290, 152, 46, 24, -45) + desk(262, 186, 50, 22, -45) + desk(200, 232, 50, 30, 45);
    s += desk(82, 378, 36, 22, 20) + desk(60, 430, 34, 28) + desk(74, 510, 34, 26, 30) + desk(138, 600, 50, 22, -45);
    s += desk(240, 680, 40, 28, 45) + desk(272, 715, 44, 28, 45) + desk(315, 765, 40, 26, -45) + desk(388, 856, 46, 20) + desk(412, 824, 20, 46);
    s += desk(622, 850, 34, 26) + desk(782, 856, 48, 20) + desk(808, 824, 20, 46) + desk(852, 655, 46, 44);
    [[598, 111], [772, 111], [400, 775], [446, 295]].forEach(p => s += rect('chair', p[0], p[1], 42, 15));
    s += desk(1590, 320, 36, 30, 45) + desk(1575, 590, 34, 26, -45) + desk(1510, 650, 40, 26, 45) + desk(1418, 752, 36, 24, -45)
        + desk(1360, 800, 38, 30, 45) + desk(1208, 822, 44, 38) + desk(1085, 836, 34, 40) + desk(1128, 836, 34, 40);
    s += desk(126, 330, 42, 16, 45) + desk(60, 492, 42, 16, -18) + desk(112, 540, 46, 16, -45);
    s += rect('chair', 598, 818, 16, 44) + rect('chair', 824, 776, 14, 42) + rect('chair', 430, 245, 14, 42);

    // meeting rooms
    s += table(493, 80, 42, 30, 2, 90) + table(180, 298, 54, 26, 3, 45) + roundTable(199, 643, 20, 5) + table(486, 830, 44, 28, 3, 90) + table(747, 826, 48, 28, 3, 90);
    s += table(958, 92, 96, 30, 5) + table(1124, 87, 80, 28, 4) + table(1278, 85, 96, 30, 5) + table(1405, 150, 60, 28, 3, 45) + table(1488, 233, 64, 28, 3, 45);
    s += table(952, 804, 120, 36, 7) + table(1245, 632, 76, 36, 5) + table(1308, 848, 54, 26, 2) + roundTable(1472, 715, 20, 5);
    s += '<ellipse class="chair" cx="1134" cy="460" rx="26" ry="42" stroke-dasharray="10 6"/><ellipse class="table" cx="1134" cy="460" rx="17" ry="34"/>';
    s += table(1625, 461, 54, 28, 3) + roundTable(1558, 430, 19) + roundTable(1558, 493, 19) + roundTable(1653, 408, 19) + roundTable(1653, 516, 19);
    s += roundTable(1602, 400, 12, 2) + roundTable(1600, 524, 12, 2) + roundTable(1360, 622, 18) + roundTable(360, 262, 14) + roundTable(560, 840, 13, 3);
    s += '<ellipse class="table" cx="463" cy="268" rx="11" ry="19"/>' + roundTable(975, 215, 14, 2) + rect('chair', 966, 178, 42, 12) + rect('chair', 994, 190, 14, 46) + rect('chair', 956, 238, 32, 12);
    s += table(1005, 674, 34, 20, 2) + rect('chair', 1232, 700, 44, 24) + rect('chair', 1214, 698, 14, 28) + rect('chair', 1280, 698, 14, 28) + rect('chair', 1228, 568, 50, 12) + rect('chair', 1104, 516, 44, 14) + desk(1160, 524, 24, 38, 20);
    s += '<circle cx="881" cy="166" r="11" fill="#fff" stroke="#999" stroke-width="3"/><circle cx="881" cy="166" r="5" fill="#777"/><path d="M1036 658h10v8l-6 8h-4zM888 640l6 6-4 3z" fill="#222"/>';

    // open space desks
    s += cubicles(218, 394, 5, 2, 42, 53) + cubicles(470, 336, 2, 2, 42, 52) + cubicles(470, 479, 2, 2, 42, 50) + cubicles(470, 622, 2, 2, 42, 52);
    s += cubicles(344, 279, 2, 1, 41, 50) + cubicles(378, 230, 1, 1, 48, 49) + desk(300, 308, 42, 48) + desk(278, 562, 40, 50) + cubicles(380, 534, 1, 2, 42, 52);
    s += desk(606, 150, 24, 132) + desk(690, 156, 24, 94) + desk(766, 148, 28, 134);
    s += cubicles(1008, 176, 4, 2, 39, 38) + cubicles(1206, 176, 3, 2, 34, 17) + cubicles(1208, 262, 5, 2, 33, 11);
    s += cubicles(1194, 432, 3, 2, 42, 56) + cubicles(1272, 340, 2, 1, 42, 54);
    s += path('thin', 'M410 208V175L428 162H468V203M322 562V640H378V534H338') + path('part', 'M1359 406h34M1359 460h34M1359 514h34M322 641H376M338 534H376M412 172L428 162H468') + rect('chair', 1362, 336, 24, 20) + rect('chair', 1362, 564, 24, 18) + rect('table', 412, 180, 14, 24) + rect('table', 340, 538, 32, 14);

    // building core
    s += rect('shaft-bg', 848, 336, 52, 246) + rect('shaft-bg', 992, 336, 60, 246);
    s += path('heavy', 'M848 338H902M992 338H1052M848 582H902M992 582H1052M558 461H848');
    s += path('wall', 'M558 336H660M690 336H750M790 336H848V582M558 305V582H848M558 618H885M558 618V726H765M664 618V726M768 618V718H836V618M840 718H1054M860 632H1054M1052 336V582M716 461V582M783 461V582M622 345V458M1030 618H1054M842 720V745M1054 720V745M992 300V336');
    s += path('beam', 'M570 336H600M620 336H660M690 336H700M790 336H848M558 582H640M690 582H780M558 618H720M750 618H885M558 726H640M690 726H765M664 370H695M785 370H805M1030 618H1054M866 632H905M968 632H1000M842 718H905M968 718H1050M675 380H805');
    s += path('thin', 'M640 370V345H660V370H690M700 336V380H742V458M742 380H805M640 395L655 415V440L640 455M835 395L820 415V440L835 455M720 340H755L740 348zM676 466V560L714 575M664 668H768M715 618V668M783 630V690H830M562 618V726M908 336V325H960V336M908 618V632H962V618M915 718V700H968V718M596 340V380M695 395h40M695 415h40M695 435h40M765 385V420H800');
    [[700, 398], [700, 418], [700, 440], [750, 430], [772, 430], [645, 418], [824, 418], [686, 652], [725, 652], [740, 652]].forEach(p => s += rect('chair', p[0], p[1], 12, 9, 4));
    s += rect('table', 575, 622, 72, 11) + rect('table', 560, 646, 11, 52) + rect('table', 648, 646, 11, 52) + rect('table', 680, 672, 74, 11);
    s += stairs(567, 345, 52, 112) + stairs(720, 466, 62, 114) + lift(800, 468, 44, 66);
    [353, 410, 469, 527].forEach(y => s += lift(854, y) + lift(998, y));
    [[693, 336], [562, 338], [562, 564], [697, 564]].forEach(p => s += rect('chair', p[0], p[1], 17, 17));

    // east rooms
    s += path('wall', 'M1088 336H1236V393H1192M1088 336V737H1210M1088 406H1192V582M1088 512H1192M1088 582H1395M1192 336V406M1262 336H1386M1358 336V582M1210 584V680H1326V584M1395 584V653H1326M1149 584V737M1210 680V737M1418 360H1510M1418 360V556H1515L1465 603L1418 556');
    s += path('beam', 'M1088 336H1105M1125 336H1236M1262 336H1386M1088 406H1192M1088 512H1192M1192 393H1236M1210 680H1326M1326 653H1395M1088 737H1105M1130 737H1200M1418 360H1510M1418 556L1465 603L1512 556');
    s += rect('table', 1420, 362, 90, 16) + rect('table', 1420, 378, 12, 176) + rect('table', 1490, 424, 20, 92) + path('thin', 'M1490 450h20M1490 472h20M1490 494h20') + path('part', 'M1490 424h20M1490 516h20');
    s += rect('table', 1132, 588, 12, 84) + rect('table', 1152, 596, 10, 138) + rect('table', 1198, 590, 10, 144) + rect('chair', 1175, 338, 30, 18) + rect('table', 1090, 362, 14, 28) + rect('table', 1315, 616, 9, 30);
    s += desk(1571, 364, 62, 12, -45) + desk(1571, 548, 56, 12, 45);

    s += '<g class="seats">' + seats.map(p => `<circle class="seat-${p[column]}" cx="${p[0]}" cy="${p[1]}" r="11"/>`).join('') + '</g>';
    document.getElementById(id).innerHTML = s;
}

drawPlan('planSummary', 2, false);
drawPlan('planStatus', 3, true);
```
